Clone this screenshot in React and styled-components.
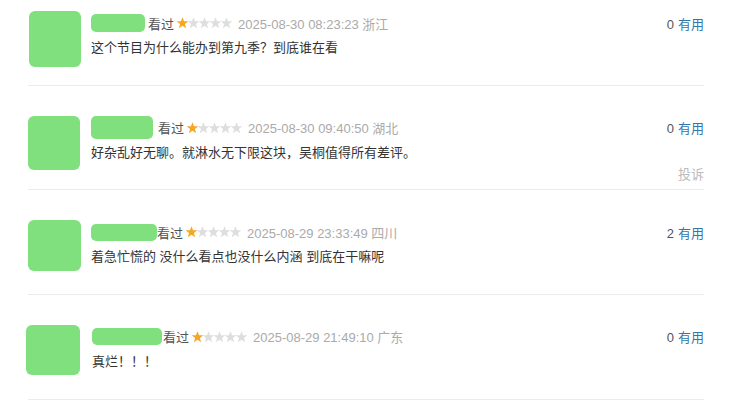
import React from "react";
import styled, { createGlobalStyle } from "styled-components";

const Global = createGlobalStyle`
  html, body { margin: 0; padding: 0; background: #fff; overflow: hidden; }
  body { font-family: "Liberation Sans", Arial, "Noto Sans CJK SC", sans-serif; }
`;

const List = styled.div`
  margin: -19px 0 0 28px;
  width: 676px;
`;

const Item = styled.div`
  display: flex;
  box-sizing: border-box;
  height: 104.67px;
  padding-top: 30px;
  border-bottom: 1px solid #ebebeb;
  position: relative;
`;

const Avatar = styled.div`
  flex: none;
  width: ${(p) => p.$w}px;
  height: ${(p) => p.$h}px;
  margin-left: ${(p) => p.$ml}px;
  margin-right: ${(p) => p.$mr}px;
  border-radius: 6px;
  background: #80e07e;
`;

const Body = styled.div`
  flex: 1;
  display: flex;
  flex-direction: column;
`;

const Meta = styled.div`
  display: flex;
  align-items: center;
  height: 24px;
  font-size: 13px;
`;

const NameBlob = styled.span`
  display: inline-block;
  width: ${(p) => p.$w}px;
  height: ${(p) => p.$h}px;
  border-radius: 5px;
  background: #80e07e;
  margin-right: ${(p) => p.$gap}px;
`;

const Watched = styled.span`
  color: #555;
  margin-right: 3px;
`;

const Stars = styled.span`
  display: inline-flex;
  align-items: center;
  margin-right: 6px;
`;

const DateText = styled.span`
  color: #aaa;
`;

const Votes = styled.div`
  margin-left: auto;
  font-size: 13px;
  color: #555;
`;

const Useful = styled.span`
  color: #3377aa;
  margin-left: 4px;
`;

const Comment = styled.div`
  margin-top: 2px;
  font-size: 13px;
  line-height: 22px;
  color: #333;
`;

const Report = styled.div`
  position: absolute;
  right: 0;
  top: 78px;
  font-size: 13px;
  color: #bbb;
`;

const Star = ({ on }) => (
  <svg width="11" height="12" viewBox="0 0 10 10" style={{ overflow: "visible" }}>
    <polygon
      points="5,-0.3 6.4,3.4 10.3,3.5 7.2,5.9 8.3,9.8 5,7.6 1.7,9.8 2.8,5.9 -0.3,3.5 3.6,3.4"
      fill={on ? "#f5a623" : "#dedede"}
    />
  </svg>
);

const items = [
  {
    av: { w: 52, h: 56, ml: 1, mr: 10 },
    blob: { w: 54, h: 18, gap: 3 },
    date: "2025-08-30 08:23:23 浙江",
    text: "这个节目为什么能办到第九季？到底谁在看",
    votes: 0,
  },
  {
    av: { w: 52, h: 54, ml: 0, mr: 11 },
    blob: { w: 62, h: 23, gap: 5 },
    date: "2025-08-30 09:40:50 湖北",
    text: "好杂乱好无聊。就淋水无下限这块，吴桐值得所有差评。",
    votes: 0,
    report: true,
  },
  {
    av: { w: 53, h: 51, ml: 0, mr: 10 },
    blob: { w: 66, h: 17, gap: 0 },
    date: "2025-08-29 23:33:49 四川",
    text: "着急忙慌的 没什么看点也没什么内涵 到底在干嘛呢",
    votes: 2,
  },
  {
    av: { w: 54, h: 50, ml: -2, mr: 12 },
    blob: { w: 70, h: 17, gap: 1 },
    date: "2025-08-29 21:49:10 广东",
    text: "真烂！！！",
    votes: 0,
  },
];

export default function App() {
  return (
    <>
      <Global />
      <List>
        {items.map((it, i) => (
          <Item key={i}>
            <Avatar $w={it.av.w} $h={it.av.h} $ml={it.av.ml} $mr={it.av.mr} />
            <Body>
              <Meta>
                <NameBlob $w={it.blob.w} $h={it.blob.h} $gap={it.blob.gap} />
                <Watched>看过</Watched>
                <Stars>
                  <Star on />
                  <Star />
                  <Star />
                  <Star />
                  <Star />
                </Stars>
                <DateText>{it.date}</DateText>
                <Votes>
                  {it.votes}
                  <Useful>有用</Useful>
                </Votes>
              </Meta>
              <Comment>{it.text}</Comment>
            </Body>
            {it.report && <Report>投诉</Report>}
          </Item>
        ))}
      </List>
    </>
  );
}
